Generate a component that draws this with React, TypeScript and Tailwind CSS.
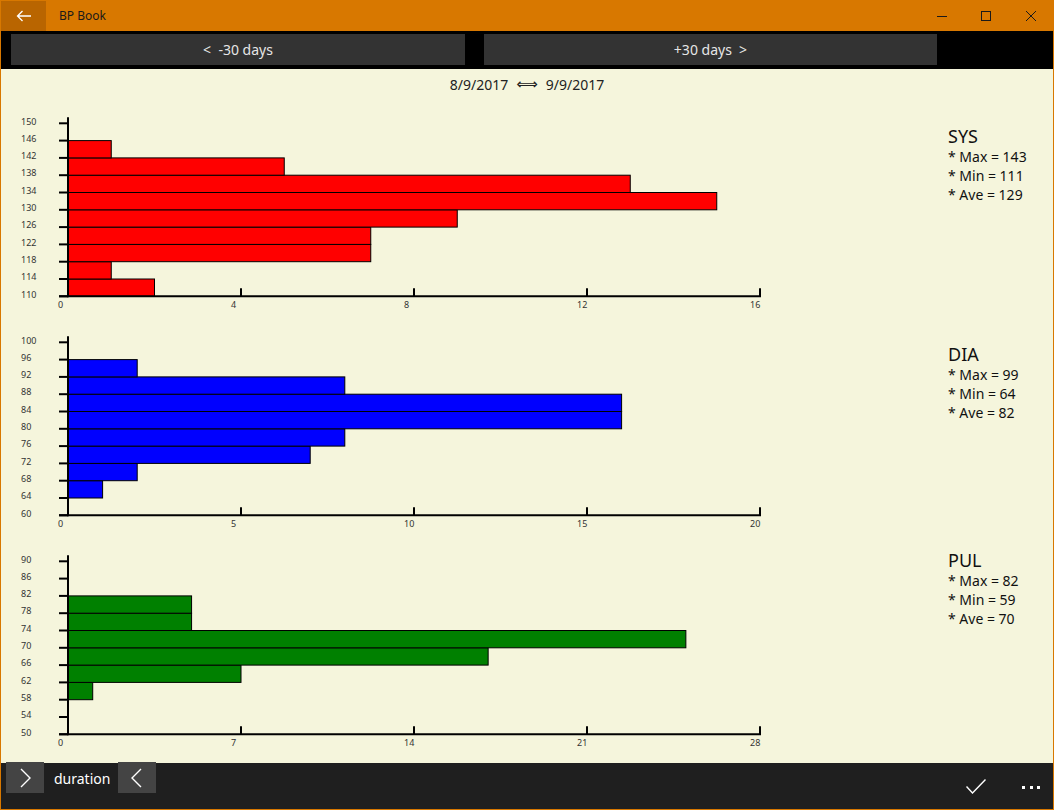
import React from "react";

type ChartProps = {
  yMin: number;
  xMax: number;
  xStep: number;
  counts: number[];
  color: string;
};

const X0 = 67;
const XEND = 759;
const TOP = 23.3;
const SP = 17.3;

function Histogram({ yMin, xMax, xStep, counts, color }: ChartProps) {
  const bottom = TOP + SP * 10;
  const ppu = (XEND - X0) / xMax;
  const yTicks = Array.from({ length: 11 }, (_, i) => i);
  const xTicks = Array.from({ length: Math.floor(xMax / xStep) + 1 }, (_, i) => i * xStep);
  return (
    <svg width={947} height={219} className="block shrink-0">
      {counts.map((c, i) =>
        c > 0 ? (
          <rect
            key={i}
            x={X0}
            y={bottom - (i + 1) * SP}
            width={c * ppu}
            height={SP}
            fill={color}
            stroke="#000"
            strokeWidth={1}
          />
        ) : null
      )}
      {/* value axis */}
      <line x1={X0} y1={TOP - 6} x2={X0} y2={bottom + 1} stroke="#000" strokeWidth={2} />
      {yTicks.map((i) => {
        const y = bottom - i * SP;
        return (
          <g key={i}>
            <line x1={58} y1={y} x2={X0} y2={y} stroke="#000" strokeWidth={2} />
            <text
              x={20}
              y={y + 1.2}
              fontSize={9}
              fill="#333"
              fontFamily="'Noto Sans', sans-serif"
            >
              {yMin + i * 4}
            </text>
          </g>
        );
      })}
      {/* count axis */}
      <line x1={58} y1={bottom} x2={XEND + 1} y2={bottom} stroke="#000" strokeWidth={2} />
      {xTicks.map((v) => {
        const x = X0 + v * ppu;
        return (
          <g key={v}>
            <line x1={x} y1={bottom - 8} x2={x} y2={bottom} stroke="#000" strokeWidth={2} />
            <text
              x={x - 10}
              y={bottom + 12}
              fontSize={9}
              fill="#333"
              fontFamily="'Noto Sans', sans-serif"
            >
              {v}
            </text>
          </g>
        );
      })}
    </svg>
  );
}

function Stats({ title, max, min, ave, pt }: { title: string; max: number; min: number; ave: number; pt: string }) {
  return (
    <div className={`flex flex-col text-[#111] ${pt}`}>
      <div className="text-[18px] leading-[22px]">{title}</div>
      <div className="text-[14px] leading-[19px]">* Max = {max}</div>
      <div className="text-[14px] leading-[19px]">* Min = {min}</div>
      <div className="text-[14px] leading-[19px]">* Ave = {ave}</div>
    </div>
  );
}

export default function App() {
  return (
    <div
      className="w-[1054px] h-[810px] border border-[#d87800] flex flex-col overflow-hidden"
      style={{ fontFamily: "'Noto Sans', 'Open Sans', sans-serif" }}
    >
      {/* title bar */}
      <div className="h-[30px] bg-[#d87800] flex items-center shrink-0">
        <div className="w-[45px] h-full bg-[#b96500] flex items-center justify-center">
          <svg width="16" height="12" viewBox="0 0 16 12">
            <path d="M15 6H1.5M6.5 1L1.5 6l5 5" fill="none" stroke="#fff" strokeWidth="1.3" />
          </svg>
        </div>
        <div className="ml-[13px] text-[12px] text-[#1a1a1a]">BP Book</div>
        <div className="ml-auto flex h-full">
          <div className="w-[44px] flex items-center justify-center">
            <svg width="12" height="12" viewBox="0 0 12 12">
              <path d="M1 6.5h10" stroke="#1a1a1a" strokeWidth="1" />
            </svg>
          </div>
          <div className="w-[44px] flex items-center justify-center">
            <svg width="12" height="12" viewBox="0 0 12 12">
              <rect x="1.5" y="1.5" width="9" height="9" fill="none" stroke="#1a1a1a" strokeWidth="1" />
            </svg>
          </div>
          <div className="w-[45px] flex items-center justify-center">
            <svg width="12" height="12" viewBox="0 0 12 12">
              <path d="M1 1l10 10M11 1L1 11" stroke="#1a1a1a" strokeWidth="1" />
            </svg>
          </div>
        </div>
      </div>

      {/* period buttons */}
      <div className="h-[38px] bg-black flex items-start pt-[3px] pl-[10px] gap-[19px] shrink-0">
        <div className="w-[454px] h-[31px] bg-[#333333] flex items-center justify-center text-[14px] text-[#e6e6e6]">
          &lt;&nbsp; -30 days
        </div>
        <div className="w-[453px] h-[31px] bg-[#333333] flex items-center justify-center text-[14px] text-[#e6e6e6]">
          +30 days&nbsp; &gt;
        </div>
      </div>

      {/* content */}
      <div className="flex-1 bg-[#f5f5dc] flex flex-col">
        <div className="h-[31px] flex items-center justify-center text-[14px] text-[#222] pb-[1px]">
          <span>8/9/2017</span>
          <span className="mx-[8px] text-[15px]" style={{ fontFamily: "'DejaVu Sans', sans-serif" }}>
            ⟺
          </span>
          <span>9/9/2017</span>
        </div>

        <div className="flex">
          <Histogram yMin={110} xMax={16} xStep={4} counts={[2, 1, 7, 7, 9, 15, 13, 5, 1, 0]} color="#ff0000" />
          <Stats title="SYS" max={143} min={111} ave={129} pt="pt-[25px]" />
        </div>
        <div className="flex">
          <Histogram yMin={60} xMax={20} xStep={5} counts={[0, 1, 2, 7, 8, 16, 16, 8, 2, 0]} color="#0000ff" />
          <Stats title="DIA" max={99} min={64} ave={82} pt="pt-[24px]" />
        </div>
        <div className="flex">
          <Histogram yMin={50} xMax={28} xStep={7} counts={[0, 0, 1, 7, 17, 25, 5, 5, 0, 0]} color="#008000" />
          <Stats title="PUL" max={82} min={59} ave={70} pt="pt-[11px]" />
        </div>
      </div>

      {/* command bar */}
      <div className="h-[46px] bg-[#1f1f1f] flex items-start shrink-0">
        <div className="ml-[5px] mt-[-1px] w-[38px] h-[31px] bg-[#444444] flex items-center justify-center">
          <svg width="12" height="20" viewBox="0 0 12 20">
            <path d="M2 1l9 9-9 9" fill="none" stroke="#fff" strokeWidth="1.4" />
          </svg>
        </div>
        <div className="ml-[10px] h-[30px] flex items-center text-[14px] text-white">duration</div>
        <div className="ml-[8px] mt-[-1px] w-[38px] h-[31px] bg-[#444444] flex items-center justify-center">
          <svg width="12" height="20" viewBox="0 0 12 20">
            <path d="M10 1L1 10l9 9" fill="none" stroke="#fff" strokeWidth="1.4" />
          </svg>
        </div>
        <div className="ml-auto mr-[13px] mt-[16px] flex items-start">
          <svg width="20" height="15" viewBox="0 0 20 15" className="block">
            <path d="M0.5 7.5l6 6.5L19.5 0.5" fill="none" stroke="#fff" strokeWidth="1.4" />
          </svg>
          <div className="ml-[36px] mt-[7px] flex gap-[4.5px]">
            <span className="block w-[3px] h-[3px] bg-white" />
            <span className="block w-[3px] h-[3px] bg-white" />
            <span className="block w-[3px] h-[3px] bg-white" />
          </div>
        </div>
      </div>
    </div>
  );
}
